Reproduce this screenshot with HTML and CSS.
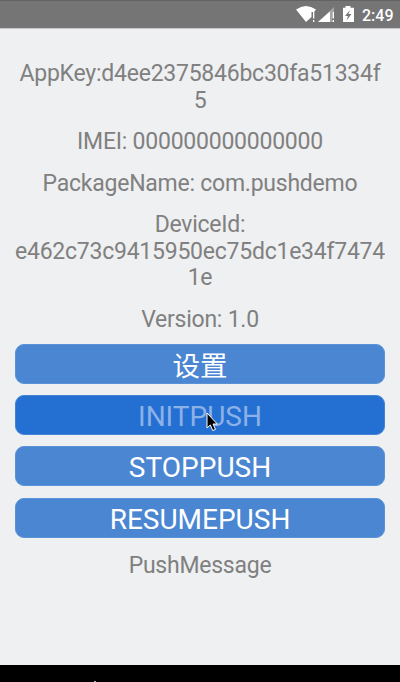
FILE: index.html
```html
<!DOCTYPE html>
<html lang="zh">
<head>
<meta charset="utf-8">
<title>Push Demo</title>
<link rel="stylesheet" href="styles.css">
</head>
<body>
<header class="status">
  <svg class="status-icons" width="62" height="28" viewBox="0 0 62 28" fill="#fff">
    <path d="M0 9.500Q10 2.500 20 9.500L18 12H15.500V17L10 22Z"/>
    <path d="M17 12h1.300v6.500H17zM17 20h1.300v2H17z"/>
    <path d="M38 7v5h-2v10H22z" opacity=".35"/>
    <path d="M34 11.500V22H22z"/>
    <path d="M36.500 12H38v6.500h-1.500zM36.500 20H38v2h-1.500z"/>
    <path fill-rule="evenodd" d="M49.500 6h5v1.700H58V22H47V7.700h2.500zM54 10l-5 6h3l-1.500 4.500 5-6.500h-3z"/>
  </svg>
  <span class="clock">2:49</span>
</header>
<main class="content">
  <p class="info">AppKey:d4ee2375846bc30fa51334f<br>5</p>
  <p class="info">IMEI: 000000000000000</p>
  <p class="info">PackageName: com.pushdemo</p>
  <p class="info">DeviceId:<br>e462c73c9415950ec75dc1e34f7474<br>1e</p>
  <p class="info">Version: 1.0</p>
  <div class="actions">
    <button class="btn settings">设置</button>
    <button class="btn pressed"><span class="label">INITPUSH</span>
      <svg class="cursor" width="12" height="20" viewBox="0 0 12 20"><path d="M1 1v15l3.300-3 2.500 5.600 2.700-1.200L7 12h4.300z" fill="#000" stroke="#fff" stroke-width="1"/></svg>
    </button>
    <button class="btn">STOPPUSH</button>
    <button class="btn">RESUMEPUSH</button>
  </div>
  <p class="info">PushMessage</p>
</main>
<footer class="navbar"><i class="nav-tip"></i></footer>
</body>
</html>
```

FILE: styles.css
```css
* { box-sizing: border-box; }
body {
  margin: 0;
  height: 682px;
  display: flex;
  flex-direction: column;
  overflow: hidden;
  background: #eff0f2;
  font-family: Roboto, "Noto Sans CJK SC", sans-serif;
}
.status {
  height: 29px;
  flex: none;
  display: flex;
  justify-content: flex-end;
  background: #757575;
  border-top: 1px solid #636363;
  border-bottom: 1px solid #c5c5c7;
  padding-right: 7px;
}
.status-icons { margin: -1px 4px 0 0; }
.clock { width: 31px; color: #fff; font-size: 16px; font-weight: 500; line-height: 29px; white-space: nowrap; }
.content { flex: 1; padding: 32.100px 15px 0; }
.info {
  margin: 0 0 14.700px;
  color: #808080;
  font-size: 23px;
  letter-spacing: -0.240px;
  line-height: 26.700px;
  text-align: center;
  white-space: nowrap;
}
.actions { display: grid; gap: 11.300px; margin: -4.400px 0 15.500px; }
.btn {
  position: relative;
  height: 40px;
  padding: 3px 0 0;
  border: 1px solid #5b91d7;
  border-radius: 9px;
  background: #4b86d2;
  color: #fff;
  font: 28px/36px Roboto, "Noto Sans CJK SC", sans-serif;
}
.settings { padding-top: 4px; font-size: 27.500px; }
.pressed { background: #246fd2; border-color: #4583d5; }
.pressed .label { color: #8cb1e7; }
.cursor { position: absolute; left: 190px; top: 16px; }
.navbar { height: 17px; flex: none; background: #000; display: flex; align-items: flex-end; }
.nav-tip { width: 2px; height: 1px; margin-left: 94px; background: #aaa; }
```
